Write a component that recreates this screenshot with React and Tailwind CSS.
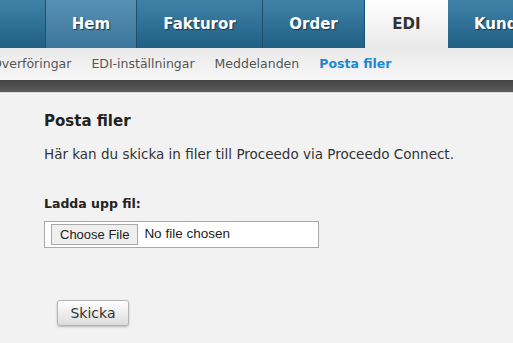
import { useState } from "react";

const tabs = [
  { label: "", width: "w-[46px]" },
  { label: "Hem", width: "w-[91px]", hover: true },
  { label: "Fakturor", width: "w-[126px]" },
  { label: "Order", width: "w-[102px]" },
  { label: "EDI", width: "w-[83px]", active: true },
  { label: "Kunder", width: "w-[100px]" },
];

const subLinks = ["Överföringar", "EDI-inställningar", "Meddelanden", "Posta filer"];

export default function App() {
  const [fileName, setFileName] = useState("");

  return (
    <div className="min-h-screen bg-[#f2f2f2] font-['DejaVu_Sans',Verdana,sans-serif] overflow-hidden">
      {/* Top tabs */}
      <div className="flex h-[48px] bg-gradient-to-b from-[#3f82a8] to-[#215f84] overflow-hidden">
        {tabs.map((tab, i) => (
          <div
            key={i}
            className={`${tab.width} shrink-0 flex items-center justify-center text-[15px] font-bold whitespace-nowrap overflow-hidden ${
              tab.active
                ? "bg-gradient-to-b from-[#ffffff] to-[#e9e9e9] text-[#333]"
                : tab.hover
                ? "bg-gradient-to-b from-[#5690b3] to-[#3c769b] text-white border-r border-[#1d4f6f] [text-shadow:1px_1px_1px_#123a55]"
                : "text-white border-r border-[#1d4f6f] [text-shadow:1px_1px_1px_#123a55]"
            } ${i === 5 ? "justify-start pl-[26px]" : ""}`}
          >
            {tab.label}
          </div>
        ))}
      </div>

      {/* Sub navigation */}
      <div className="h-[32px] bg-gradient-to-b from-[#e9e9e9] to-[#f7f7f7] flex items-center gap-[20px] -ml-[8px] text-[12.5px] whitespace-nowrap">
        {subLinks.map((link) => (
          <a
            key={link}
            href="#"
            className={link === "Posta filer" ? "text-[#1e88d0] font-bold" : "text-[#555]"}
          >
            {link}
          </a>
        ))}
      </div>
      <div className="h-[13px] bg-gradient-to-b from-[#444] to-[#5c5c5c] border-b border-[#d8d8d8]" />

      {/* Main content */}
      <div className="pl-[44px] pt-[18px]">
        <h1 className="text-[15px] leading-[20px] font-bold text-[#222]">Posta filer</h1>
        <p className="text-[13.5px] leading-[18px] text-[#333] mt-[14px] whitespace-nowrap">
          Här kan du skicka in filer till Proceedo via Proceedo Connect.
        </p>

        <label className="block text-[12.5px] leading-[16px] font-bold text-[#222] mt-[33px]">Ladda upp fil:</label>
        <label className="mt-[9px] w-[275px] h-[27px] border border-[#a9a9a9] bg-white flex items-center pl-[6px] cursor-pointer">
          <input
            type="file"
            className="hidden"
            onChange={(e) => setFileName(e.target.files[0]?.name || "")}
          />
          <span className="h-[21px] px-[8px] bg-[#efefef] border border-[#a9a9a9] flex items-center text-[13px] text-[#222] font-['Liberation_Sans',Arial,sans-serif]">
            Choose File
          </span>
          <span className="ml-[6px] text-[13.5px] text-[#222] font-['Liberation_Sans',Arial,sans-serif]">
            {fileName || "No file chosen"}
          </span>
        </label>

        <button className="mt-[52px] ml-[13px] w-[72px] h-[26px] rounded-[3px] border border-[#b5b5b5] bg-gradient-to-b from-[#ffffff] to-[#dcdcdc] shadow-[0_1px_2px_rgba(0,0,0,0.25)] text-[14px] text-[#333]">
          Skicka
        </button>
      </div>
    </div>
  );
}
